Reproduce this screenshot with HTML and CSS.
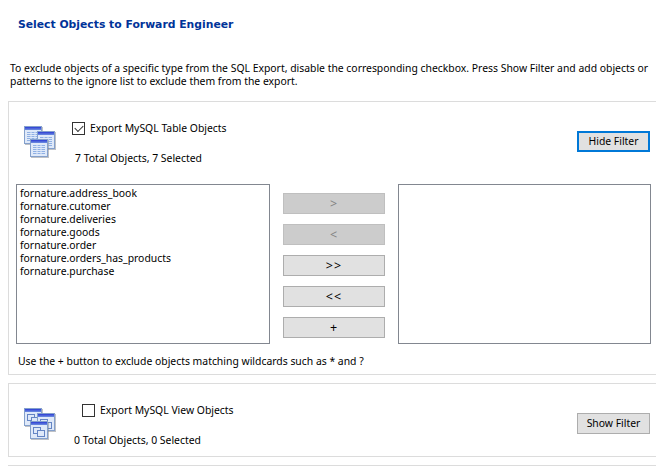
FILE: index.html
```html
<!DOCTYPE html>
<html lang="en">
<head>
<meta charset="utf-8">
<title>Select Objects to Forward Engineer</title>
<link rel="stylesheet" href="styles.css">
</head>
<body>
<svg class="defs" width="0" height="0" aria-hidden="true">
  <defs>
    <linearGradient id="bar" x1="0" y1="0" x2="0" y2="1"><stop offset="0" stop-color="#2c3cd4"/><stop offset="1" stop-color="#6f8fe0"/></linearGradient>
    <g id="win">
      <rect x="1" y="1" width="18" height="18" fill="#7f848c" opacity=".5"/>
      <rect x=".5" y=".5" width="17" height="17" fill="#dfe9f9" stroke="#84a0cc"/>
      <rect x="1" y="1" width="16" height="3" fill="url(#bar)"/>
    </g>
    <g id="tbl">
      <use href="#win"/>
      <path d="M3 6h12v1H3zM3 8h12v1H3zM3 10h12v1H3zM3 12h12v1H3zM3 14h12v1H3z" fill="#8fb0e4"/>
      <path d="M7 5.500v10M11 5.500v10" stroke="#dfe9f9" stroke-width="1"/>
    </g>
    <g id="view">
      <use href="#win"/>
      <rect x="3.500" y="6.500" width="7" height="6" fill="none" stroke="#6585c4"/>
      <rect x="7.500" y="9.500" width="7" height="6" fill="#dfe9f9" stroke="#6585c4"/>
    </g>
    <symbol id="icon-tables" viewBox="0 0 33 34"><use href="#tbl" x="0" y="1"/><use href="#tbl" x="13" y="6"/><use href="#tbl" x="6" y="14"/></symbol>
    <symbol id="icon-views" viewBox="0 0 33 34"><use href="#view" x="0" y="1"/><use href="#view" x="13" y="6"/><use href="#view" x="6" y="14"/></symbol>
  </defs>
</svg>
<header class="page-head">
  <h1 class="title">Select Objects to Forward Engineer</h1>
  <p class="intro">To exclude objects of a specific type from the SQL Export, disable the corresponding checkbox. Press Show Filter and add objects or patterns to the ignore list to exclude them from the export.</p>
</header>
<section class="panel panel-open">
  <div class="panel-head">
    <svg class="obj-icon" width="33" height="34"><use href="#icon-tables"/></svg>
    <div class="panel-info">
      <label class="check"><input type="checkbox" class="box" checked><span>Export MySQL Table Objects</span></label>
      <div class="status">7 Total Objects, 7 Selected</div>
    </div>
    <button class="btn btn-filter btn-focus" type="button">Hide Filter</button>
  </div>
  <div class="filter">
    <ul class="list">
      <li>fornature.address_book</li>
      <li>fornature.cutomer</li>
      <li>fornature.deliveries</li>
      <li>fornature.goods</li>
      <li>fornature.order</li>
      <li>fornature.orders_has_products</li>
      <li>fornature.purchase</li>
    </ul>
    <div class="moves">
      <button class="btn btn-move" type="button" disabled>&gt;</button>
      <button class="btn btn-move" type="button" disabled>&lt;</button>
      <button class="btn btn-move" type="button">&gt;&gt;</button>
      <button class="btn btn-move" type="button">&lt;&lt;</button>
      <button class="btn btn-move" type="button">+</button>
    </div>
    <ul class="list list-right"></ul>
  </div>
  <p class="hint">Use the + button to exclude objects matching wildcards such as * and ?</p>
</section>
<section class="panel panel-closed">
  <div class="panel-head">
    <svg class="obj-icon" width="33" height="34"><use href="#icon-views"/></svg>
    <div class="panel-info">
      <label class="check"><input type="checkbox" class="box"><span>Export MySQL View Objects</span></label>
      <div class="status">0 Total Objects, 0 Selected</div>
    </div>
    <button class="btn btn-filter" type="button">Show Filter</button>
  </div>
</section>
<section class="panel panel-next"></section>
</body>
</html>
```
FILE: styles.css
```css
* { box-sizing: border-box; }
html, body { margin: 0; padding: 0; }
body {
  width: 656px;
  height: 466px;
  overflow: hidden;
  background: #fff;
  color: #000;
  font: 10.4px/13px "Noto Sans", sans-serif;
}
.defs { position: absolute; }
.page-head { height: 101px; padding: 17px 0 0 10px; }
.title {
  margin: 0 0 0 8px;
  font-family: "DejaVu Sans", sans-serif;
  font-size: 10.8px;
  line-height: 16px;
  font-weight: bold;
  color: #003399;
}
.intro { margin: 29px 0 0; width: 640px; }
.panel {
  margin-left: 8px;
  border: 1px solid #dcdcdc;
  border-right: 0;
  background: #fff;
}
.panel-open { height: 274px; }
.panel-closed { height: 74px; margin-top: 8px; }
.panel-next { margin-top: 8px; height: 10px; }
.panel-head { display: flex; position: relative; }
.panel-open .panel-head { height: 82px; }
.panel-closed .panel-head { height: 72px; }
.obj-icon { flex: none; margin-left: 15px; margin-top: 23px; }
.panel-info { flex: 1; padding-top: 20px; }
.panel-open .panel-info { padding-left: 15px; }
.panel-closed .panel-info { padding-left: 16px; }
.check { display: flex; align-items: center; gap: 5px; height: 13px; }
.panel-closed .check { margin-left: 9px; }
.box {
  appearance: none;
  margin: 0;
  width: 13px;
  height: 13px;
  border: 1px solid #333;
  background: #fff;
  position: relative;
}
.box:checked::after {
  content: "";
  position: absolute;
  left: 2px;
  top: 0;
  width: 7px;
  height: 4px;
  margin: 2px 0 0;
  border-left: 1px solid #333;
  border-bottom: 1px solid #333;
  transform: rotate(-45deg);
}
.status { margin-top: 17px; margin-left: 3px; }
.panel-closed .status { margin-left: 1px; }
.btn {
  font: inherit;
  color: #000;
  background: #e1e1e1;
  border: 1px solid #adadad;
  border-radius: 0;
  padding: 0;
}
.btn:disabled { background: #cccccc; border-color: #bfbfbf; color: #838383; }
.btn-filter { width: 73px; height: 21px; margin: 29px 6px 0 auto; flex: none; }
.btn-focus { border: 2px solid #0078d7; }
.filter { display: flex; padding-left: 7px; }
.list {
  list-style: none;
  margin: 0;
  padding: 2px 3px;
  width: 254px;
  height: 160px;
  border: 1px solid #828790;
  background: #fff;
}
.list-right { width: 253px; height: 160px; margin-left: 13px; }
.moves {
  display: flex;
  flex-direction: column;
  gap: 10px;
  width: 102px;
  margin-left: 13px;
  padding-top: 9px;
}
.btn-move { width: 102px; height: 21px; font-size: 12.5px; letter-spacing: 1px; }
.hint { margin: 11px 0 0 9px; }
```
